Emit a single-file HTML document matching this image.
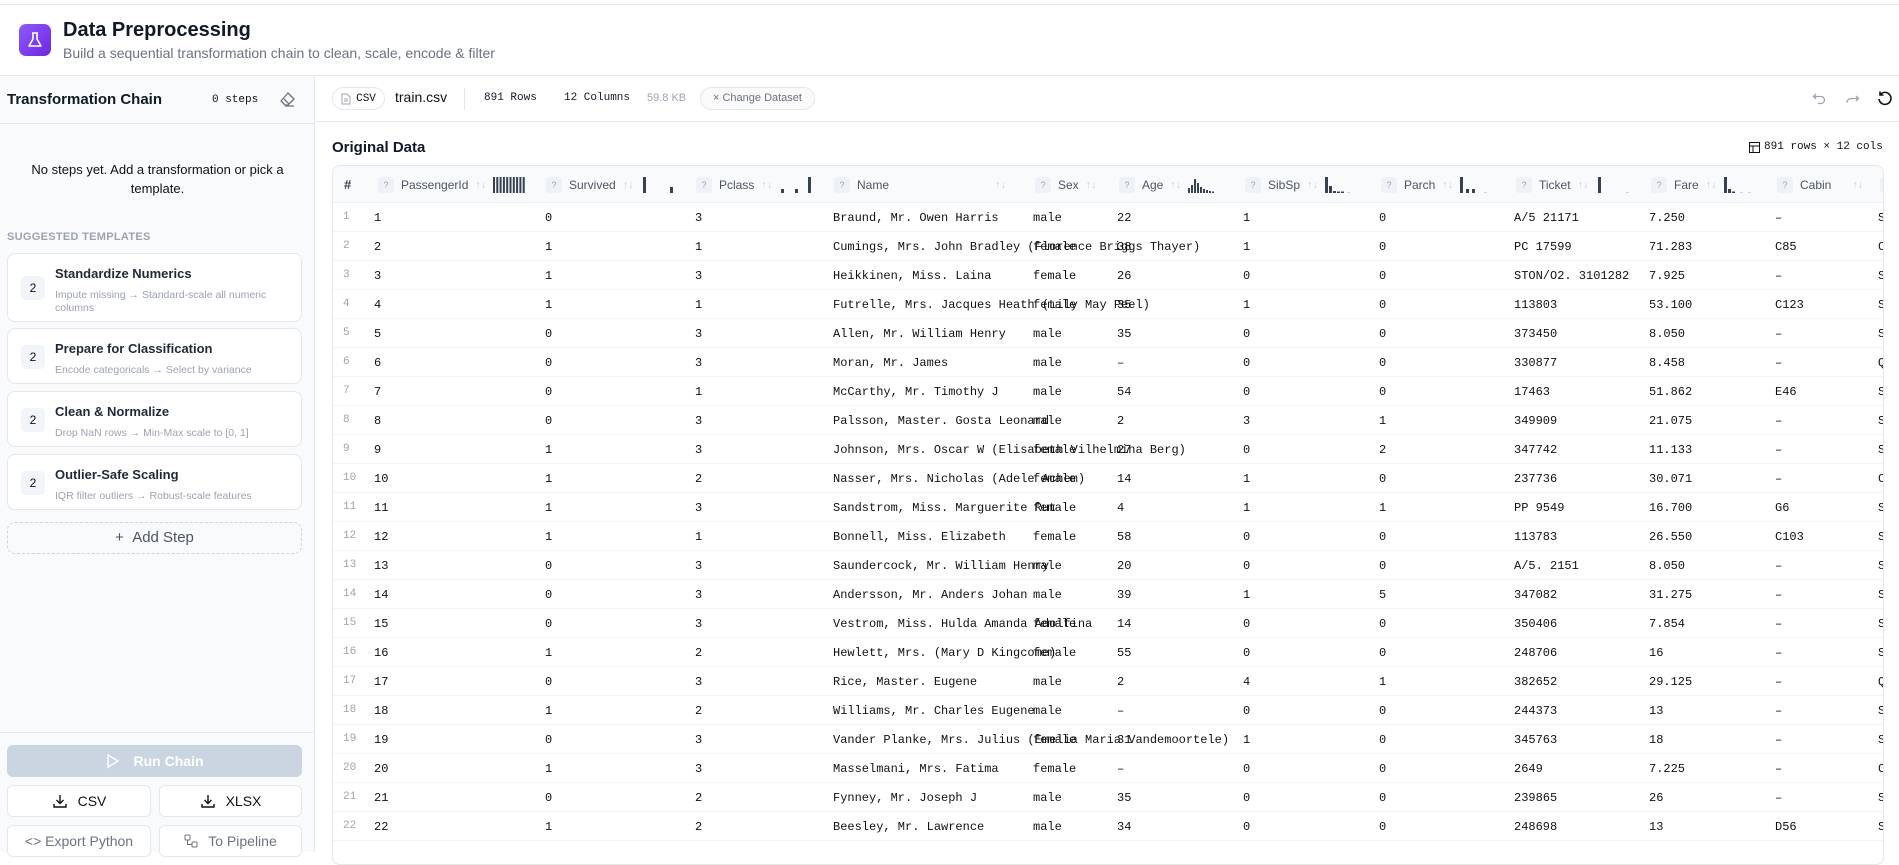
<!DOCTYPE html>
<html><head><meta charset="utf-8"><style>
*{box-sizing:border-box;margin:0;padding:0}
body{width:1899px;height:852px;overflow:hidden;background:#fff;font-family:"Liberation Sans",sans-serif;color:#111827;position:relative}
.abs{position:absolute}
.mono{font-family:"Liberation Mono",monospace}
.topline{left:0;right:0;top:4px;border-top:1px solid #e5e7eb}
.hdr{left:0;right:0;top:75px;border-top:1px solid #e5e7eb}
.side{left:0;top:76px;width:315px;height:776px;background:#f9fafb;border-right:1px solid #e5e7eb}
.card{position:absolute;left:7px;width:295px;background:#fff;border:1px solid #e5e7eb;border-radius:8px}
.card .b{position:absolute;left:13px;width:24px;height:24px;background:#f1f5f9;border-radius:5px;font-size:12px;text-align:center;line-height:24px;color:#111}
.card .t{position:absolute;left:47px;top:12px;font-size:13px;font-weight:bold;color:#1f2937}
.card .d{position:absolute;left:47px;font-size:10.5px;color:#9ca3af;line-height:13px;width:235px}
.btn{position:absolute;background:#fff;border:1px solid #e5e7eb;border-radius:6px;font-size:14px;color:#111;display:flex;align-items:center;justify-content:center;gap:10px}
.pill{border:1px solid #e5e7eb;border-radius:12px}
.row{position:absolute;left:333px;width:1550px;height:29px;border-bottom:1px solid #f1f5f9;font-family:"Liberation Mono",monospace;font-size:12px;color:#111}
.row span{position:absolute;top:8px;white-space:nowrap}
.row .n{color:#9ca3af;font-size:11px}
.th{position:absolute;top:0;height:37px;display:flex;align-items:center;gap:7px;font-size:12px;color:#4b5563;white-space:nowrap}
.q{display:inline-block;width:16px;height:16px;background:#eef2f7;border-radius:3px;font-size:9px;color:#9ca3af;text-align:center;line-height:16px}
.s{color:#cbd5e1;font-size:11px}
</style></head><body>
<div class="abs topline"></div>
<div class="abs" style="left:19px;top:24px;width:32px;height:32px;border-radius:7px;background:linear-gradient(135deg,#8b5cf6,#7c3aed 60%,#6d28d9)">
<svg width="32" height="32" viewBox="0 0 32 32"><path d="M13 9h6M14 9v6l-4 7h12l-4-7V9" fill="none" stroke="#fff" stroke-width="1.6" stroke-linejoin="round"/></svg></div>
<div class="abs" style="left:63px;top:19px;font-size:20px;font-weight:bold;color:#111827">Data Preprocessing</div>
<div class="abs" style="left:63px;top:45px;font-size:14px;color:#6b7280">Build a sequential transformation chain to clean, scale, encode &amp; filter</div>
<div class="abs hdr"></div>

<div class="abs side">
 <div class="abs" style="left:0;top:0;width:314px;height:48px;border-bottom:1px solid #e5e7eb"></div>
 <div class="abs" style="left:7px;top:15px;font-size:15px;font-weight:bold;color:#111827">Transformation Chain</div>
 <div class="abs mono" style="left:212px;top:18px;font-size:11px;color:#111">0 steps</div>
 <svg class="abs" style="left:279px;top:15px" width="18" height="18" viewBox="0 0 18 18"><path d="M9 2l6 6-6 6H6L2 10z M5 8l5 5 M6 15h9" fill="none" stroke="#6b7280" stroke-width="1.3" stroke-linejoin="round"/></svg>
 <div class="abs" style="left:20px;top:84px;width:275px;text-align:center;font-size:13px;line-height:19px;color:#111">No steps yet. Add a transformation or pick a template.</div>
 <div class="abs" style="left:7px;top:155px;font-size:11px;font-weight:bold;color:#9ca3af;letter-spacing:.3px">SUGGESTED TEMPLATES</div>
 <div class="card" style="top:177px;height:69px"><div class="b" style="top:22px">2</div><div class="t">Standardize Numerics</div><div class="d" style="top:35px">Impute missing → Standard-scale all numeric columns</div></div>
 <div class="card" style="top:252px;height:56px"><div class="b" style="top:16px">2</div><div class="t">Prepare for Classification</div><div class="d" style="top:35px">Encode categoricals → Select by variance</div></div>
 <div class="card" style="top:315px;height:56px"><div class="b" style="top:16px">2</div><div class="t">Clean &amp; Normalize</div><div class="d" style="top:35px">Drop NaN rows → Min-Max scale to [0, 1]</div></div>
 <div class="card" style="top:378px;height:56px"><div class="b" style="top:16px">2</div><div class="t">Outlier-Safe Scaling</div><div class="d" style="top:35px">IQR filter outliers → Robust-scale features</div></div>
 <div class="abs" style="left:7px;top:446px;width:295px;height:32px;border:1px dashed #d1d5db;border-radius:8px;text-align:center;line-height:30px;font-size:15px;color:#4b5563">+&nbsp;&nbsp;Add Step</div>
 <div class="abs" style="left:0;top:656px;width:314px;border-top:1px solid #e5e7eb"></div>
 <div class="abs" style="left:7px;top:669px;width:295px;height:32px;background:#cbd5e1;border-radius:6px;color:#fff;font-size:14px;font-weight:bold;display:flex;align-items:center;justify-content:center;gap:14px"><svg width="14" height="16"><path d="M2 2l10 6-10 6z" fill="none" stroke="#fff" stroke-width="1.4"/></svg>Run Chain</div>
</div>
<div class="btn" style="left:7px;top:785px;width:144px;height:32px"><svg width="16" height="16"><path d="M8 2v8M4.5 7L8 10.5 11.5 7M2 11v3h12v-3" fill="none" stroke="#111" stroke-width="1.4"/></svg>CSV</div>
<div class="btn" style="left:159px;top:785px;width:143px;height:32px"><svg width="16" height="16"><path d="M8 2v8M4.5 7L8 10.5 11.5 7M2 11v3h12v-3" fill="none" stroke="#111" stroke-width="1.4"/></svg>XLSX</div>
<div class="btn" style="left:7px;top:825px;width:144px;height:32px;color:#6b7280">&lt;&gt;&nbsp;Export Python</div>
<div class="btn" style="left:159px;top:825px;width:143px;height:32px;color:#6b7280"><svg width="14" height="14"><rect x="1" y="1" width="5" height="5" rx="1" fill="none" stroke="#6b7280"/><rect x="8" y="8" width="5" height="5" rx="1" fill="none" stroke="#6b7280"/><path d="M3.5 6v4.5H8" fill="none" stroke="#6b7280"/></svg>To Pipeline</div>

<!-- toolbar -->
<div class="abs pill mono" style="left:332px;top:87px;width:53px;height:23px;font-size:11px;display:flex;align-items:center;justify-content:center;gap:5px;color:#111"><svg width="10" height="12"><path d="M1 1h5l3 3v7H1z M3 6h4M3 8h4" fill="none" stroke="#9ca3af"/></svg>CSV</div>
<div class="abs" style="left:395px;top:89px;font-size:14px;color:#111">train.csv</div>
<div class="abs" style="left:464px;top:88px;height:22px;border-left:1px solid #e5e7eb"></div>
<div class="abs mono" style="left:484px;top:92px;font-size:11px">891 Rows</div>
<div class="abs mono" style="left:564px;top:92px;font-size:11px">12 Columns</div>
<div class="abs" style="left:647px;top:92px;font-size:11px;color:#9ca3af">59.8 KB</div>
<div class="abs pill" style="left:700px;top:87px;width:115px;height:23px;font-size:11px;color:#6b7280;text-align:center;line-height:21px;background:#fafafa">× Change Dataset</div>
<svg class="abs" style="left:1812px;top:91px" width="16" height="16"><path d="M4 3L1.5 5.5 4 8M2 5.5h7a3.5 3.5 0 010 7H6" fill="none" stroke="#9ca3af" stroke-width="1.3"/></svg>
<svg class="abs" style="left:1844px;top:91px" width="16" height="16"><path d="M12 5l2.5 2.5L12 10M14 7.5H7a4 4 0 00-4 4" fill="none" stroke="#9ca3af" stroke-width="1.3"/></svg>
<svg class="abs" style="left:1876px;top:90px" width="18" height="18"><path d="M4 5a6 6 0 11-1 4M4 1.5V5h3.5" fill="none" stroke="#111" stroke-width="1.6"/></svg>
<div class="abs" style="left:316px;top:121px;right:0;border-top:1px solid #e5e7eb"></div>

<div class="abs" style="left:332px;top:139px;font-size:15px;font-weight:bold">Original Data</div>
<div class="abs mono" style="left:1749px;top:141px;font-size:11px;color:#111;display:flex;align-items:center;gap:4px"><svg width="11" height="11"><rect x=".5" y=".5" width="10" height="10" fill="none" stroke="#111"/><path d="M.5 4h10M4 4v6.5" stroke="#111"/></svg>891 rows × 12 cols</div>

<!-- table -->
<div class="abs" style="left:332px;top:165px;width:1552px;height:700px;border:1px solid #e5e7eb;border-radius:8px;overflow:hidden">
 <div class="abs" style="left:0;top:0;width:1552px;height:37px;background:#f8fafc;border-bottom:1px solid #eef0f3">
  <div class="th" style="left:11px;font-weight:bold;color:#374151;font-size:13px">#</div>
  <div class="th" style="left:45px"><span class="q">?</span>PassengerId<span class="s">↑↓</span><svg width="34" height="16"><g fill="#374151"><rect x="0" y="0" width="2" height="16"/><rect x="3.3" y="0" width="2" height="16"/><rect x="6.6" y="0" width="2" height="16"/><rect x="9.9" y="0" width="2" height="16"/><rect x="13.2" y="0" width="2" height="16"/><rect x="16.5" y="0" width="2" height="16"/><rect x="19.8" y="0" width="2" height="16"/><rect x="23.1" y="0" width="2" height="16"/><rect x="26.4" y="0" width="2" height="16"/><rect x="29.7" y="0" width="2" height="16"/></g></svg></div>
  <div class="th" style="left:213px"><span class="q">?</span>Survived<span class="s">↑↓</span><svg width="34" height="16"><g fill="#374151"><rect x="2" y="0" width="3" height="16"/><rect x="29" y="10" width="3" height="6"/></g></svg></div>
  <div class="th" style="left:363px"><span class="q">?</span>Pclass<span class="s">↑↓</span><svg width="34" height="16"><g fill="#374151"><rect x="2" y="12" width="3" height="4"/><rect x="16" y="12" width="3" height="4"/><rect x="29" y="0" width="3" height="16"/></g></svg></div>
  <div class="th" style="left:501px"><span class="q">?</span>Name</div>
  <div class="th s" style="left:662px">↑↓</div>
  <div class="th" style="left:702px"><span class="q">?</span>Sex<span class="s">↑↓</span></div>
  <div class="th" style="left:786px"><span class="q">?</span>Age<span class="s">↑↓</span><svg width="30" height="16"><g fill="#374151"><rect x="0" y="11" width="2" height="5"/><rect x="3" y="8" width="2" height="8"/><rect x="6" y="2" width="2" height="14"/><rect x="9" y="6" width="2" height="10"/><rect x="12" y="10" width="2" height="6"/><rect x="15" y="12" width="2" height="4"/><rect x="18" y="13" width="2" height="3"/><rect x="21" y="14" width="2" height="2"/><rect x="24" y="14.5" width="2" height="1.5"/></g></svg></div>
  <div class="th" style="left:912px"><span class="q">?</span>SibSp<span class="s">↑↓</span><svg width="30" height="16"><g fill="#374151"><rect x="0" y="0" width="3" height="16"/><rect x="4" y="9" width="3" height="7"/><rect x="8" y="14" width="3" height="2"/><rect x="12" y="14.5" width="3" height="1.5"/><rect x="16" y="14.5" width="3" height="1.5"/></g><rect x="22" y="15" width="3" height="1" fill="#cbd5e1"/></svg></div>
  <div class="th" style="left:1048px"><span class="q">?</span>Parch<span class="s">↑↓</span><svg width="30" height="16"><g fill="#374151"><rect x="0" y="0" width="3" height="16"/><rect x="6" y="12" width="3" height="4"/><rect x="12" y="12" width="3" height="4"/></g><rect x="24" y="15" width="3" height="1" fill="#cbd5e1"/></svg></div>
  <div class="th" style="left:1183px"><span class="q">?</span>Ticket<span class="s">↑↓</span><svg width="34" height="16"><rect x="2" y="0" width="3" height="16" fill="#374151"/><rect x="30" y="15" width="3" height="1" fill="#cbd5e1"/></svg></div>
  <div class="th" style="left:1318px"><span class="q">?</span>Fare<span class="s">↑↓</span><svg width="30" height="16"><g fill="#374151"><rect x="0" y="0" width="3" height="16"/><rect x="4" y="12" width="3" height="4"/><rect x="8" y="14.5" width="3" height="1.5"/></g><rect x="16" y="15" width="3" height="1" fill="#cbd5e1"/><rect x="24" y="15" width="3" height="1" fill="#cbd5e1"/></svg></div>
  <div class="th" style="left:1444px"><span class="q">?</span>Cabin<span class="s" style="margin-left:14px">↑↓</span></div>
  <div class="th" style="left:1547px"><span class="q">?</span></div>
 </div>
</div>
<div class="abs" style="left:333px;top:202px;width:1550px;height:650px;overflow:hidden">
<div style="position:relative;left:-333px;top:-202px">
<div class="row" style="top:203px"><span class="n" style="left:10px">1</span><span style="left:41px">1</span><span style="left:212px">0</span><span style="left:362px">3</span><span style="left:500px">Braund, Mr. Owen Harris</span><span style="left:700px">male</span><span style="left:784px">22</span><span style="left:910px">1</span><span style="left:1046px">0</span><span style="left:1181px">A/5 21171</span><span style="left:1316px">7.250</span><span style="left:1442px">–</span><span style="left:1545px">S</span></div>
<div class="row" style="top:232px"><span class="n" style="left:10px">2</span><span style="left:41px">2</span><span style="left:212px">1</span><span style="left:362px">1</span><span style="left:500px">Cumings, Mrs. John Bradley (Florence Briggs Thayer)</span><span style="left:700px">female</span><span style="left:784px">38</span><span style="left:910px">1</span><span style="left:1046px">0</span><span style="left:1181px">PC 17599</span><span style="left:1316px">71.283</span><span style="left:1442px">C85</span><span style="left:1545px">C</span></div>
<div class="row" style="top:261px"><span class="n" style="left:10px">3</span><span style="left:41px">3</span><span style="left:212px">1</span><span style="left:362px">3</span><span style="left:500px">Heikkinen, Miss. Laina</span><span style="left:700px">female</span><span style="left:784px">26</span><span style="left:910px">0</span><span style="left:1046px">0</span><span style="left:1181px">STON/O2. 3101282</span><span style="left:1316px">7.925</span><span style="left:1442px">–</span><span style="left:1545px">S</span></div>
<div class="row" style="top:290px"><span class="n" style="left:10px">4</span><span style="left:41px">4</span><span style="left:212px">1</span><span style="left:362px">1</span><span style="left:500px">Futrelle, Mrs. Jacques Heath (Lily May Peel)</span><span style="left:700px">female</span><span style="left:784px">35</span><span style="left:910px">1</span><span style="left:1046px">0</span><span style="left:1181px">113803</span><span style="left:1316px">53.100</span><span style="left:1442px">C123</span><span style="left:1545px">S</span></div>
<div class="row" style="top:319px"><span class="n" style="left:10px">5</span><span style="left:41px">5</span><span style="left:212px">0</span><span style="left:362px">3</span><span style="left:500px">Allen, Mr. William Henry</span><span style="left:700px">male</span><span style="left:784px">35</span><span style="left:910px">0</span><span style="left:1046px">0</span><span style="left:1181px">373450</span><span style="left:1316px">8.050</span><span style="left:1442px">–</span><span style="left:1545px">S</span></div>
<div class="row" style="top:348px"><span class="n" style="left:10px">6</span><span style="left:41px">6</span><span style="left:212px">0</span><span style="left:362px">3</span><span style="left:500px">Moran, Mr. James</span><span style="left:700px">male</span><span style="left:784px">–</span><span style="left:910px">0</span><span style="left:1046px">0</span><span style="left:1181px">330877</span><span style="left:1316px">8.458</span><span style="left:1442px">–</span><span style="left:1545px">Q</span></div>
<div class="row" style="top:377px"><span class="n" style="left:10px">7</span><span style="left:41px">7</span><span style="left:212px">0</span><span style="left:362px">1</span><span style="left:500px">McCarthy, Mr. Timothy J</span><span style="left:700px">male</span><span style="left:784px">54</span><span style="left:910px">0</span><span style="left:1046px">0</span><span style="left:1181px">17463</span><span style="left:1316px">51.862</span><span style="left:1442px">E46</span><span style="left:1545px">S</span></div>
<div class="row" style="top:406px"><span class="n" style="left:10px">8</span><span style="left:41px">8</span><span style="left:212px">0</span><span style="left:362px">3</span><span style="left:500px">Palsson, Master. Gosta Leonard</span><span style="left:700px">male</span><span style="left:784px">2</span><span style="left:910px">3</span><span style="left:1046px">1</span><span style="left:1181px">349909</span><span style="left:1316px">21.075</span><span style="left:1442px">–</span><span style="left:1545px">S</span></div>
<div class="row" style="top:435px"><span class="n" style="left:10px">9</span><span style="left:41px">9</span><span style="left:212px">1</span><span style="left:362px">3</span><span style="left:500px">Johnson, Mrs. Oscar W (Elisabeth Vilhelmina Berg)</span><span style="left:700px">female</span><span style="left:784px">27</span><span style="left:910px">0</span><span style="left:1046px">2</span><span style="left:1181px">347742</span><span style="left:1316px">11.133</span><span style="left:1442px">–</span><span style="left:1545px">S</span></div>
<div class="row" style="top:464px"><span class="n" style="left:10px">10</span><span style="left:41px">10</span><span style="left:212px">1</span><span style="left:362px">2</span><span style="left:500px">Nasser, Mrs. Nicholas (Adele Achem)</span><span style="left:700px">female</span><span style="left:784px">14</span><span style="left:910px">1</span><span style="left:1046px">0</span><span style="left:1181px">237736</span><span style="left:1316px">30.071</span><span style="left:1442px">–</span><span style="left:1545px">C</span></div>
<div class="row" style="top:493px"><span class="n" style="left:10px">11</span><span style="left:41px">11</span><span style="left:212px">1</span><span style="left:362px">3</span><span style="left:500px">Sandstrom, Miss. Marguerite Rut</span><span style="left:700px">female</span><span style="left:784px">4</span><span style="left:910px">1</span><span style="left:1046px">1</span><span style="left:1181px">PP 9549</span><span style="left:1316px">16.700</span><span style="left:1442px">G6</span><span style="left:1545px">S</span></div>
<div class="row" style="top:522px"><span class="n" style="left:10px">12</span><span style="left:41px">12</span><span style="left:212px">1</span><span style="left:362px">1</span><span style="left:500px">Bonnell, Miss. Elizabeth</span><span style="left:700px">female</span><span style="left:784px">58</span><span style="left:910px">0</span><span style="left:1046px">0</span><span style="left:1181px">113783</span><span style="left:1316px">26.550</span><span style="left:1442px">C103</span><span style="left:1545px">S</span></div>
<div class="row" style="top:551px"><span class="n" style="left:10px">13</span><span style="left:41px">13</span><span style="left:212px">0</span><span style="left:362px">3</span><span style="left:500px">Saundercock, Mr. William Henry</span><span style="left:700px">male</span><span style="left:784px">20</span><span style="left:910px">0</span><span style="left:1046px">0</span><span style="left:1181px">A/5. 2151</span><span style="left:1316px">8.050</span><span style="left:1442px">–</span><span style="left:1545px">S</span></div>
<div class="row" style="top:580px"><span class="n" style="left:10px">14</span><span style="left:41px">14</span><span style="left:212px">0</span><span style="left:362px">3</span><span style="left:500px">Andersson, Mr. Anders Johan</span><span style="left:700px">male</span><span style="left:784px">39</span><span style="left:910px">1</span><span style="left:1046px">5</span><span style="left:1181px">347082</span><span style="left:1316px">31.275</span><span style="left:1442px">–</span><span style="left:1545px">S</span></div>
<div class="row" style="top:609px"><span class="n" style="left:10px">15</span><span style="left:41px">15</span><span style="left:212px">0</span><span style="left:362px">3</span><span style="left:500px">Vestrom, Miss. Hulda Amanda Adolfina</span><span style="left:700px">female</span><span style="left:784px">14</span><span style="left:910px">0</span><span style="left:1046px">0</span><span style="left:1181px">350406</span><span style="left:1316px">7.854</span><span style="left:1442px">–</span><span style="left:1545px">S</span></div>
<div class="row" style="top:638px"><span class="n" style="left:10px">16</span><span style="left:41px">16</span><span style="left:212px">1</span><span style="left:362px">2</span><span style="left:500px">Hewlett, Mrs. (Mary D Kingcome)</span><span style="left:700px">female</span><span style="left:784px">55</span><span style="left:910px">0</span><span style="left:1046px">0</span><span style="left:1181px">248706</span><span style="left:1316px">16</span><span style="left:1442px">–</span><span style="left:1545px">S</span></div>
<div class="row" style="top:667px"><span class="n" style="left:10px">17</span><span style="left:41px">17</span><span style="left:212px">0</span><span style="left:362px">3</span><span style="left:500px">Rice, Master. Eugene</span><span style="left:700px">male</span><span style="left:784px">2</span><span style="left:910px">4</span><span style="left:1046px">1</span><span style="left:1181px">382652</span><span style="left:1316px">29.125</span><span style="left:1442px">–</span><span style="left:1545px">Q</span></div>
<div class="row" style="top:696px"><span class="n" style="left:10px">18</span><span style="left:41px">18</span><span style="left:212px">1</span><span style="left:362px">2</span><span style="left:500px">Williams, Mr. Charles Eugene</span><span style="left:700px">male</span><span style="left:784px">–</span><span style="left:910px">0</span><span style="left:1046px">0</span><span style="left:1181px">244373</span><span style="left:1316px">13</span><span style="left:1442px">–</span><span style="left:1545px">S</span></div>
<div class="row" style="top:725px"><span class="n" style="left:10px">19</span><span style="left:41px">19</span><span style="left:212px">0</span><span style="left:362px">3</span><span style="left:500px">Vander Planke, Mrs. Julius (Emelia Maria Vandemoortele)</span><span style="left:700px">female</span><span style="left:784px">31</span><span style="left:910px">1</span><span style="left:1046px">0</span><span style="left:1181px">345763</span><span style="left:1316px">18</span><span style="left:1442px">–</span><span style="left:1545px">S</span></div>
<div class="row" style="top:754px"><span class="n" style="left:10px">20</span><span style="left:41px">20</span><span style="left:212px">1</span><span style="left:362px">3</span><span style="left:500px">Masselmani, Mrs. Fatima</span><span style="left:700px">female</span><span style="left:784px">–</span><span style="left:910px">0</span><span style="left:1046px">0</span><span style="left:1181px">2649</span><span style="left:1316px">7.225</span><span style="left:1442px">–</span><span style="left:1545px">C</span></div>
<div class="row" style="top:783px"><span class="n" style="left:10px">21</span><span style="left:41px">21</span><span style="left:212px">0</span><span style="left:362px">2</span><span style="left:500px">Fynney, Mr. Joseph J</span><span style="left:700px">male</span><span style="left:784px">35</span><span style="left:910px">0</span><span style="left:1046px">0</span><span style="left:1181px">239865</span><span style="left:1316px">26</span><span style="left:1442px">–</span><span style="left:1545px">S</span></div>
<div class="row" style="top:812px"><span class="n" style="left:10px">22</span><span style="left:41px">22</span><span style="left:212px">1</span><span style="left:362px">2</span><span style="left:500px">Beesley, Mr. Lawrence</span><span style="left:700px">male</span><span style="left:784px">34</span><span style="left:910px">0</span><span style="left:1046px">0</span><span style="left:1181px">248698</span><span style="left:1316px">13</span><span style="left:1442px">D56</span><span style="left:1545px">S</span></div>
</div></div>
</body></html>
